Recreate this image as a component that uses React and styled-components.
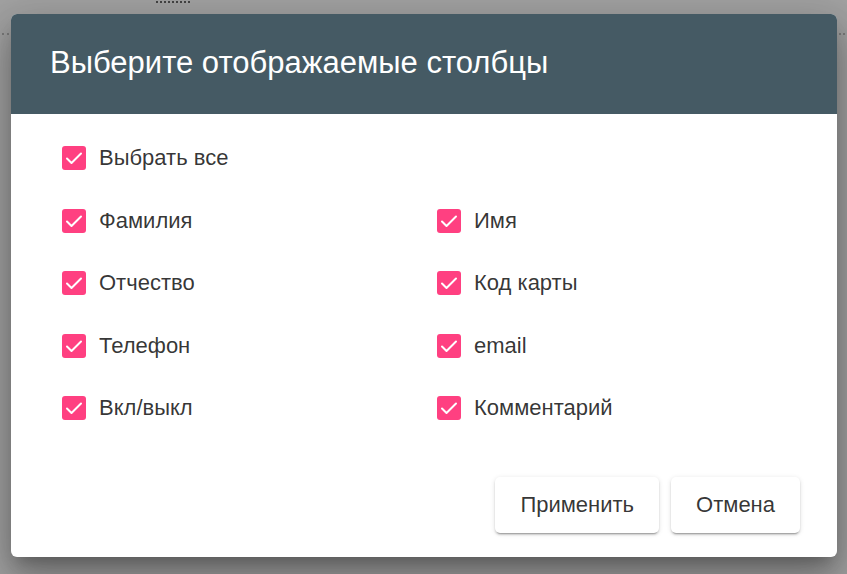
import React, { useState } from "react";
import styled, { createGlobalStyle } from "styled-components";

const GlobalStyle = createGlobalStyle`
  html, body { margin: 0; padding: 0; }
  body {
    font-family: "Liberation Sans", Arial, sans-serif;
    background: #a2a2a2;
  }
`;

const Backdrop = styled.div`
  position: relative;
  width: 847px;
  height: 574px;
  overflow: hidden;
  background: #a2a2a2;
  box-sizing: border-box;
  padding: 14px 10px 0 11px;
`;

/* faint dashed rule of the page under the overlay */
const PageRule = styled.div`
  position: absolute;
  left: 2px;
  right: 2px;
  top: 33px;
  border-top: 2px dotted #7c7c7c;
`;

/* bottom edge of a page heading peeking above the dialog */
const PageMark = styled.div`
  position: absolute;
  left: 156px;
  top: 1px;
  width: 34px;
  border-top: 2px dotted #444;
`;

const Dialog = styled.div`
  position: relative;
  width: 826px;
  height: 543px;
  background: #fff;
  border-radius: 6px;
  overflow: hidden;
  display: flex;
  flex-direction: column;
  box-shadow: 0 11px 15px -7px rgba(0, 0, 0, 0.25),
    0 24px 38px 3px rgba(0, 0, 0, 0.2), 0 9px 46px 8px rgba(0, 0, 0, 0.14);
`;

const Header = styled.div`
  height: 100px;
  background: #455a64;
  display: flex;
  align-items: center;
  padding-left: 39px;
  box-sizing: border-box;
`;

const Title = styled.h2`
  margin: 0;
  padding-bottom: 3px;
  font-weight: 400;
  font-size: 31px;
  color: #fff;
`;

const Body = styled.div`
  flex: 1;
  padding: 32px 0 0 51px;
`;

const Grid = styled.div`
  display: grid;
  grid-template-columns: 375px 1fr;
  grid-auto-rows: 24px;
  row-gap: 38.5px;
`;

const Option = styled.label`
  display: flex;
  align-items: center;
  gap: 13px;
  cursor: pointer;
  grid-column: ${(p) => (p.$full ? "1 / -1" : "auto")};
  font-size: 22px;
  color: rgba(0, 0, 0, 0.8);
  user-select: none;
`;

const Box = styled.span`
  width: 24px;
  height: 24px;
  border-radius: 3px;
  box-sizing: border-box;
  flex: none;
  display: flex;
  align-items: center;
  justify-content: center;
  background: ${(p) => (p.$on ? "#ff4081" : "#fff")};
  border: ${(p) => (p.$on ? "none" : "2px solid rgba(0,0,0,0.54)")};
`;

const Footer = styled.div`
  display: flex;
  justify-content: flex-end;
  gap: 12px;
  padding: 0 37px 24px 0;
`;

const Button = styled.button`
  height: 56px;
  padding: 0 ${(p) => p.$pad}px;
  border: none;
  border-radius: 5px;
  background: #fff;
  font-family: "Liberation Sans", Arial, sans-serif;
  font-size: 22px;
  color: rgba(0, 0, 0, 0.8);
  cursor: pointer;
  box-shadow: 0 3px 1px -2px rgba(0, 0, 0, 0.2), 0 2px 2px 0 rgba(0, 0, 0, 0.14),
    0 1px 5px 0 rgba(0, 0, 0, 0.12);
`;

const Check = () => (
  <svg width="24" height="24" viewBox="0 0 24 24">
    <polyline
      points="5,12.5 9.5,17 19,7.5"
      fill="none"
      stroke="#fff"
      strokeWidth="2"
      strokeLinecap="round"
      strokeLinejoin="round"
    />
  </svg>
);

const columns = [
  "Фамилия",
  "Имя",
  "Отчество",
  "Код карты",
  "Телефон",
  "email",
  "Вкл/выкл",
  "Комментарий",
];

export default function App() {
  const [checked, setChecked] = useState(() => columns.map(() => true));
  const all = checked.every(Boolean);

  const toggle = (i) =>
    setChecked((c) => c.map((v, j) => (j === i ? !v : v)));
  const toggleAll = () => setChecked(columns.map(() => !all));

  return (
    <>
      <GlobalStyle />
      <Backdrop>
        <PageMark />
        <PageRule />
        <Dialog>
          <Header>
            <Title>Выберите отображаемые столбцы</Title>
          </Header>
          <Body>
            <Grid>
              <Option $full onClick={toggleAll}>
                <Box $on={all}>{all && <Check />}</Box>
                Выбрать все
              </Option>
              {columns.map((name, i) => (
                <Option key={name} onClick={() => toggle(i)}>
                  <Box $on={checked[i]}>{checked[i] && <Check />}</Box>
                  {name}
                </Option>
              ))}
            </Grid>
          </Body>
          <Footer>
            <Button $pad={25}>Применить</Button>
            <Button $pad={25}>Отмена</Button>
          </Footer>
        </Dialog>
      </Backdrop>
    </>
  );
}
